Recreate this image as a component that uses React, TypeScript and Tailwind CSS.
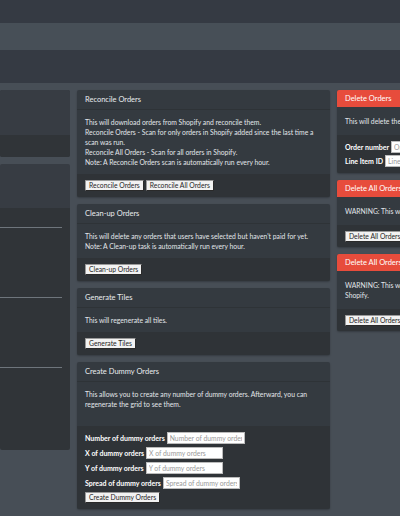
import React from 'react';

const font = { fontFamily: 'Lato, "Noto Sans", sans-serif' };

function Btn({ children }: { children: React.ReactNode }) {
  return (
    <button
      type="button"
      className="h-[11px] px-[3px] bg-[#f2f2f2] text-[#1f1f1f] text-[6.8px] leading-none border border-[#9a9a9a] border-r-[#2a2a2a] border-b-[#2a2a2a] rounded-[1px] whitespace-nowrap shrink-0"
    >
      {children}
    </button>
  );
}

function Field({ label, placeholder, width }: { label: string; placeholder: string; width: string }) {
  return (
    <div className="flex items-center gap-[2px] h-[12px] whitespace-nowrap">
      <span className="font-bold text-[7px] leading-none text-white">{label}</span>
      <input
        placeholder={placeholder}
        className={`h-[12px] ${width} shrink-0 bg-white border border-[#bbb] px-[2px] text-[6.8px] text-[#333] placeholder:text-[#9a9a9a] outline-none`}
      />
    </div>
  );
}

function Card({
  title,
  danger,
  tallFooter,
  body,
  footer,
}: {
  title: string;
  danger?: boolean;
  tallFooter?: boolean;
  body: React.ReactNode;
  footer: React.ReactNode;
}) {
  return (
    <div className="bg-[#343a40] rounded-[2px] overflow-hidden shadow-[0_1px_2px_rgba(0,0,0,0.25)]">
      <div
        className={`px-[8px] text-[7.5px] leading-none whitespace-nowrap flex items-center ${
          danger ? 'bg-[#e74c3c] text-white h-[17px]' : 'text-[#e9ecef] h-[20px] border-b border-[#2e3337]'
        }`}
      >
        {title}
      </div>
      <div
        className={`px-[8px] text-[6.8px] leading-[10px] text-[#e2e6ea] whitespace-nowrap ${
          danger ? 'py-[9px]' : 'py-[7px]'
        }`}
      >
        {body}
      </div>
      <div
        className={`bg-[#2f3337] px-[8px] flex items-center leading-none ${
          danger && !tallFooter ? 'py-[5.5px]' : 'py-[6px]'
        }`}
      >
        {footer}
      </div>
    </div>
  );
}

export default function App() {
  return (
    <div className="w-[400px] h-[516px] overflow-hidden bg-[#474e56]" style={font}>
      {/* top navigation bands */}
      <div className="h-[23px] bg-[#353a43]" />
      <div className="h-[27px] bg-[#474f57]" />
      <div className="h-[33px] bg-[#353a43]" />

      <div className="flex gap-[7px] pt-[7px] items-start">
        {/* left column (cut off) */}
        <div className="w-[70px] shrink-0 flex flex-col gap-[7px]">
          <div className="rounded-[2px] overflow-hidden bg-[#363b42]">
            <div className="h-[45px] bg-[#373c43]" />
            <div className="h-[22px] bg-[#303438]" />
          </div>
          <div className="rounded-[2px] overflow-hidden">
            <div className="h-[44px] bg-[#373c43]" />
            <div className="h-[242px] bg-[#303438] pr-[8px] pt-[19px] flex flex-col gap-[69px]">
              <div className="h-[1px] bg-[#6e757c]" />
              <div className="h-[1px] bg-[#6e757c]" />
              <div className="h-[1px] bg-[#6e757c]" />
            </div>
          </div>
        </div>

        {/* middle column */}
        <div className="w-[253px] shrink-0 flex flex-col gap-[7px]">
          <Card
            title="Reconcile Orders"
            body={
              <>
                <div>This will download orders from Shopify and reconcile them.</div>
                <div>Reconcile Orders - Scan for only orders in Shopify added since the last time a</div>
                <div>scan was run.</div>
                <div>Reconcile All Orders - Scan for all orders in Shopify.</div>
                <div>Note: A Reconcile Orders scan is automatically run every hour.</div>
              </>
            }
            footer={
              <div className="flex gap-[2px]">
                <Btn>Reconcile Orders</Btn>
                <Btn>Reconcile All Orders</Btn>
              </div>
            }
          />
          <Card
            title="Clean-up Orders"
            body={
              <>
                <div>This will delete any orders that users have selected but haven't paid for yet.</div>
                <div>Note: A Clean-up task is automatically run every hour.</div>
              </>
            }
            footer={<Btn>Clean-up Orders</Btn>}
          />
          <Card
            title="Generate Tiles"
            body={<div>This will regenerate all tiles.</div>}
            footer={<Btn>Generate Tiles</Btn>}
          />
          <Card
            title="Create Dummy Orders"
            body={
              <div className="pb-[10px]">
                <div>This allows you to create any number of dummy orders. Afterward, you can</div>
                <div>regenerate the grid to see them.</div>
              </div>
            }
            footer={
              <div className="flex flex-col gap-[3px] items-start">
                <Field label="Number of dummy orders" placeholder="Number of dummy orders" width="w-[78px]" />
                <Field label="X of dummy orders" placeholder="X of dummy orders" width="w-[77px]" />
                <Field label="Y of dummy orders" placeholder="Y of dummy orders" width="w-[77px]" />
                <Field label="Spread of dummy orders" placeholder="Spread of dummy orders" width="w-[77px]" />
                <Btn>Create Dummy Orders</Btn>
              </div>
            }
          />
        </div>

        {/* right column (cut off) */}
        <div className="w-[253px] shrink-0 flex flex-col gap-[7px]">
          <Card
            danger
            tallFooter
            title="Delete Orders"
            body={<div>This will delete the selected order or line item.</div>}
            footer={
              <div className="flex flex-col gap-[2px] items-start">
                <Field label="Order number" placeholder="Order number" width="w-[77px]" />
                <Field label="Line Item ID" placeholder="Line Item ID" width="w-[77px]" />
              </div>
            }
          />
          <Card
            danger
            title="Delete All Orders"
            body={<div>WARNING: This will delete all orders in the database.</div>}
            footer={<Btn>Delete All Orders</Btn>}
          />
          <Card
            danger
            title="Delete All Orders in Shopify"
            body={
              <>
                <div>WARNING: This will delete all orders in the database and in</div>
                <div>Shopify.</div>
              </>
            }
            footer={<Btn>Delete All Orders in Shopify</Btn>}
          />
        </div>
      </div>
    </div>
  );
}
